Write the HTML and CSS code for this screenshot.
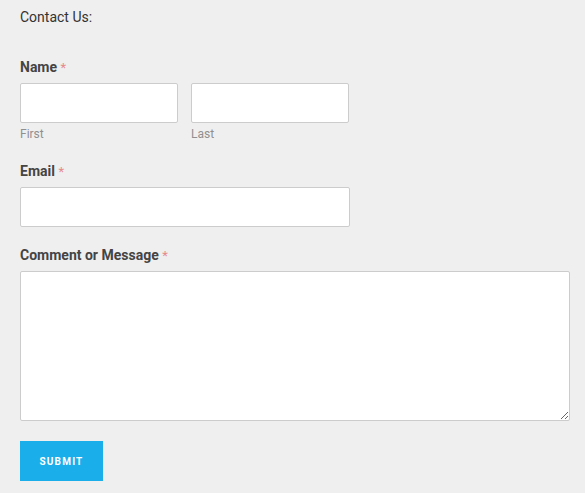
FILE: index.html
```html
<!DOCTYPE html>
<html>
<head>
<meta charset="utf-8">
<link rel="stylesheet" href="styles.css">
</head>
<body>
<form class="form">
  <div class="title">Contact Us:</div>

  <div class="field field-name">
    <div class="label">Name <span class="req">*</span></div>
    <div class="name-row">
      <div class="name-part">
        <input class="input input-half" type="text">
        <div class="sub">First</div>
      </div>
      <div class="name-part">
        <input class="input input-half" type="text">
        <div class="sub">Last</div>
      </div>
    </div>
  </div>

  <div class="field field-email">
    <div class="label">Email <span class="req">*</span></div>
    <input class="input input-email" type="text">
  </div>

  <div class="field field-msg">
    <div class="label">Comment or Message <span class="req">*</span></div>
    <textarea class="input textarea"></textarea>
  </div>

  <button class="submit" type="button">SUBMIT</button>
</form>
</body>
</html>
```

FILE: styles.css
```css
html, body {
  margin: 0;
  padding: 0;
  background: #efefef;
}
body {
  font-family: Roboto, "Liberation Sans", sans-serif;
  color: #444;
}
.form {
  display: flex;
  flex-direction: column;
  align-items: flex-start;
  padding: 8px 16px 0 20px;
}
.title {
  font-size: 14px;
  line-height: 18px;
  color: #333;
}
.field {
  display: flex;
  flex-direction: column;
  align-items: flex-start;
}
.field-name { margin-top: 32px; }
.field-email { margin-top: 20px; }
.field-msg { margin-top: 19px; align-self: stretch; }
.label {
  font-size: 14px;
  line-height: 18px;
  height: 18px;
  font-weight: 700;
  color: #444;
  margin-bottom: 7px;
}
.req {
  color: #e58a8a;
  font-weight: 400;
  font-size: 13px;
  line-height: 0;
}
.name-row {
  display: flex;
  gap: 13px;
}
.name-part {
  display: flex;
  flex-direction: column;
}
.input {
  box-sizing: border-box;
  background: #fff;
  border: 1px solid #ccc;
  border-radius: 2px;
  height: 40px;
  margin: 0;
  padding: 6px 8px;
  font-family: inherit;
  outline: none;
  display: block;
}
.input-half { width: 158px; }
.input-email { width: 330px; }
.textarea {
  width: 550px;
  height: 150px;
  resize: both;
}
.sub {
  font-size: 12px;
  line-height: 15px;
  color: #8f8f8f;
  margin-top: 4px;
}
.submit {
  margin-top: 20px;
  width: 83px;
  height: 40px;
  border: none;
  border-radius: 0;
  background: #1aaeeb;
  color: #fff;
  font-family: inherit;
  font-size: 10px;
  font-weight: 700;
  letter-spacing: 1.2px;
  padding: 0;
  cursor: pointer;
}
```
